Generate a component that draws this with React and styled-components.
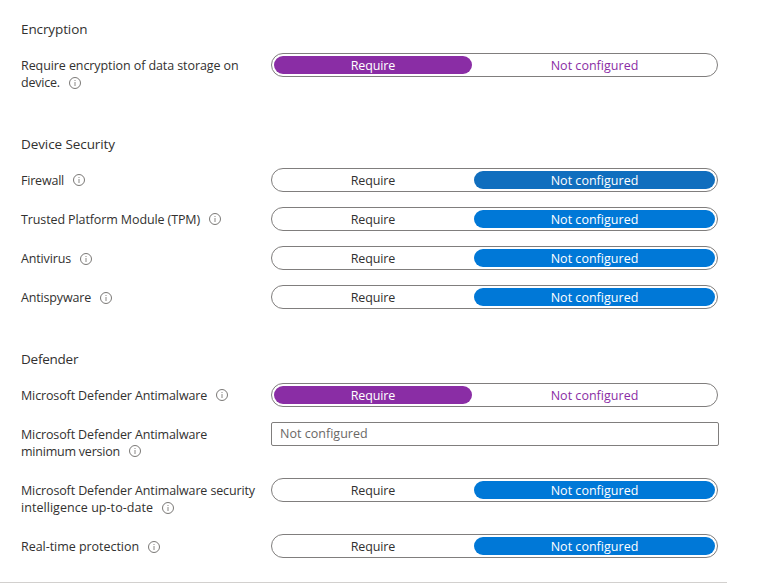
import React from 'react';
import styled, { createGlobalStyle } from 'styled-components';

const GlobalStyle = createGlobalStyle`
  * { box-sizing: border-box; }
  body {
    margin: 0;
    background: #fff;
    color: #323130;
    font-family: "Segoe UI", "Open Sans", "Noto Sans", sans-serif;
    font-size: 12.5px;
  }
`;

const Page = styled.main`
  width: 727px;
  height: 583px;
  padding: 19px 0 0 21px;
  border-bottom: 1px solid #d2d0ce;
`;

const Section = styled.section`
  margin-bottom: 40px;
`;

const Heading = styled.h2`
  margin: 0 0 14px;
  font-size: 13.5px;
  font-weight: 400;
  line-height: 20px;
  letter-spacing: ${(p) => p.$tracking}px;
`;

const Rows = styled.div`
  display: flex;
  flex-direction: column;
  gap: 15px;
`;

const Row = styled.div`
  display: grid;
  grid-template-columns: 250px 448px;
  align-items: start;
`;

const Label = styled.div`
  padding: 4px 0 3px;
`;

const Line = styled.div`
  display: flex;
  align-items: flex-start;
  height: 17px;
  line-height: 17px;
  white-space: nowrap;
`;

const LineText = styled.span`
  letter-spacing: ${(p) => p.$tracking}px;
`;

const InfoSvg = styled.svg`
  width: 12px;
  height: 12px;
  margin: ${(p) => (p.$low ? 3 : 2)}px 0 0 9px;
  flex: none;
`;

const Toggle = styled.div`
  display: grid;
  grid-template-columns: 198px 241px;
  gap: 2px;
  width: 447px;
  height: 24px;
  padding: 2px;
  border: 1px solid #807e7d;
  border-radius: 12px;
`;

const tones = { purple: '#8a2da5', blue: '#0078d7', hover: '#106ebe' };

const Option = styled.button`
  height: 18px;
  padding: 2px 0 0;
  border: 0;
  border-radius: 9px;
  background: ${(p) => (p.$selected ? tones[p.$tone] : 'transparent')};
  color: ${(p) => (p.$selected ? '#fff' : p.$tone === 'purple' ? tones.purple : '#323130')};
  font: inherit;
  line-height: 16px;
  letter-spacing: ${(p) => p.$tracking}px;
  text-align: center;
`;

const VersionInput = styled.input`
  width: 448px;
  height: 24px;
  padding: 0 8px 2px;
  border: 1px solid #807e7d;
  border-radius: 2px;
  background: #fff;
  font: inherit;
  letter-spacing: 0.02px;

  &::placeholder {
    color: #6a6866;
    opacity: 1;
  }
`;

const InfoIcon = ({ low }) => (
  <InfoSvg $low={low} viewBox="0 0 12 12" fill="none">
    <circle cx="6" cy="6" r="5.5" stroke="#6b6967" strokeWidth="0.9" />
    <path d="M6 5v4M6 3v1" stroke="#8a8886" strokeWidth="1" />
  </InfoSvg>
);

// Each label line is [text, letter spacing].
const sections = [
  {
    title: 'Encryption',
    tracking: -0.11,
    rows: [
      {
        lines: [['Require encryption of data storage on', -0.085], ['device.', -0.2]],
        value: 'Require',
        tone: 'purple',
        low: true,
      },
    ],
  },
  {
    title: 'Device Security',
    tracking: -0.09,
    rows: [
      { lines: [['Firewall', -0.2]], value: 'Not configured', tone: 'hover' },
      { lines: [['Trusted Platform Module (TPM)', -0.11]], value: 'Not configured', tone: 'blue' },
      { lines: [['Antivirus', -0.14]], value: 'Not configured', tone: 'blue', low: true },
      { lines: [['Antispyware', -0.16]], value: 'Not configured', tone: 'blue', low: true },
    ],
  },
  {
    title: 'Defender',
    tracking: -0.24,
    rows: [
      { lines: [['Microsoft Defender Antimalware', -0.13]], value: 'Require', tone: 'purple' },
      { lines: [['Microsoft Defender Antimalware', -0.13], ['minimum version', -0.22]], input: true },
      {
        lines: [['Microsoft Defender Antimalware security', -0.125], ['intelligence up-to-date', 0.05]],
        value: 'Not configured',
        tone: 'blue',
        low: true,
      },
      { lines: [['Real-time protection', -0.04]], value: 'Not configured', tone: 'blue', low: true },
    ],
  },
];

const options = [['Require', -0.11], ['Not configured', 0.02]];

function Setting({ lines, value, tone, input, low }) {
  return (
    <Row>
      <Label>
        {lines.map(([text, tracking], i) => (
          <Line key={text}>
            <LineText $tracking={tracking}>{text}</LineText>
            {i === lines.length - 1 && <InfoIcon low={low} />}
          </Line>
        ))}
      </Label>
      {input ? (
        <VersionInput placeholder="Not configured" />
      ) : (
        <Toggle>
          {options.map(([name, tracking]) => (
            <Option key={name} $selected={name === value} $tone={tone} $tracking={tracking}>
              {name}
            </Option>
          ))}
        </Toggle>
      )}
    </Row>
  );
}

export default function App() {
  return (
    <>
      <GlobalStyle />
      <Page>
        {sections.map((s) => (
          <Section key={s.title}>
            <Heading $tracking={s.tracking}>{s.title}</Heading>
            <Rows>
              {s.rows.map((r) => (
                <Setting key={r.lines.map((l) => l[0]).join(' ')} {...r} />
              ))}
            </Rows>
          </Section>
        ))}
      </Page>
    </>
  );
}
